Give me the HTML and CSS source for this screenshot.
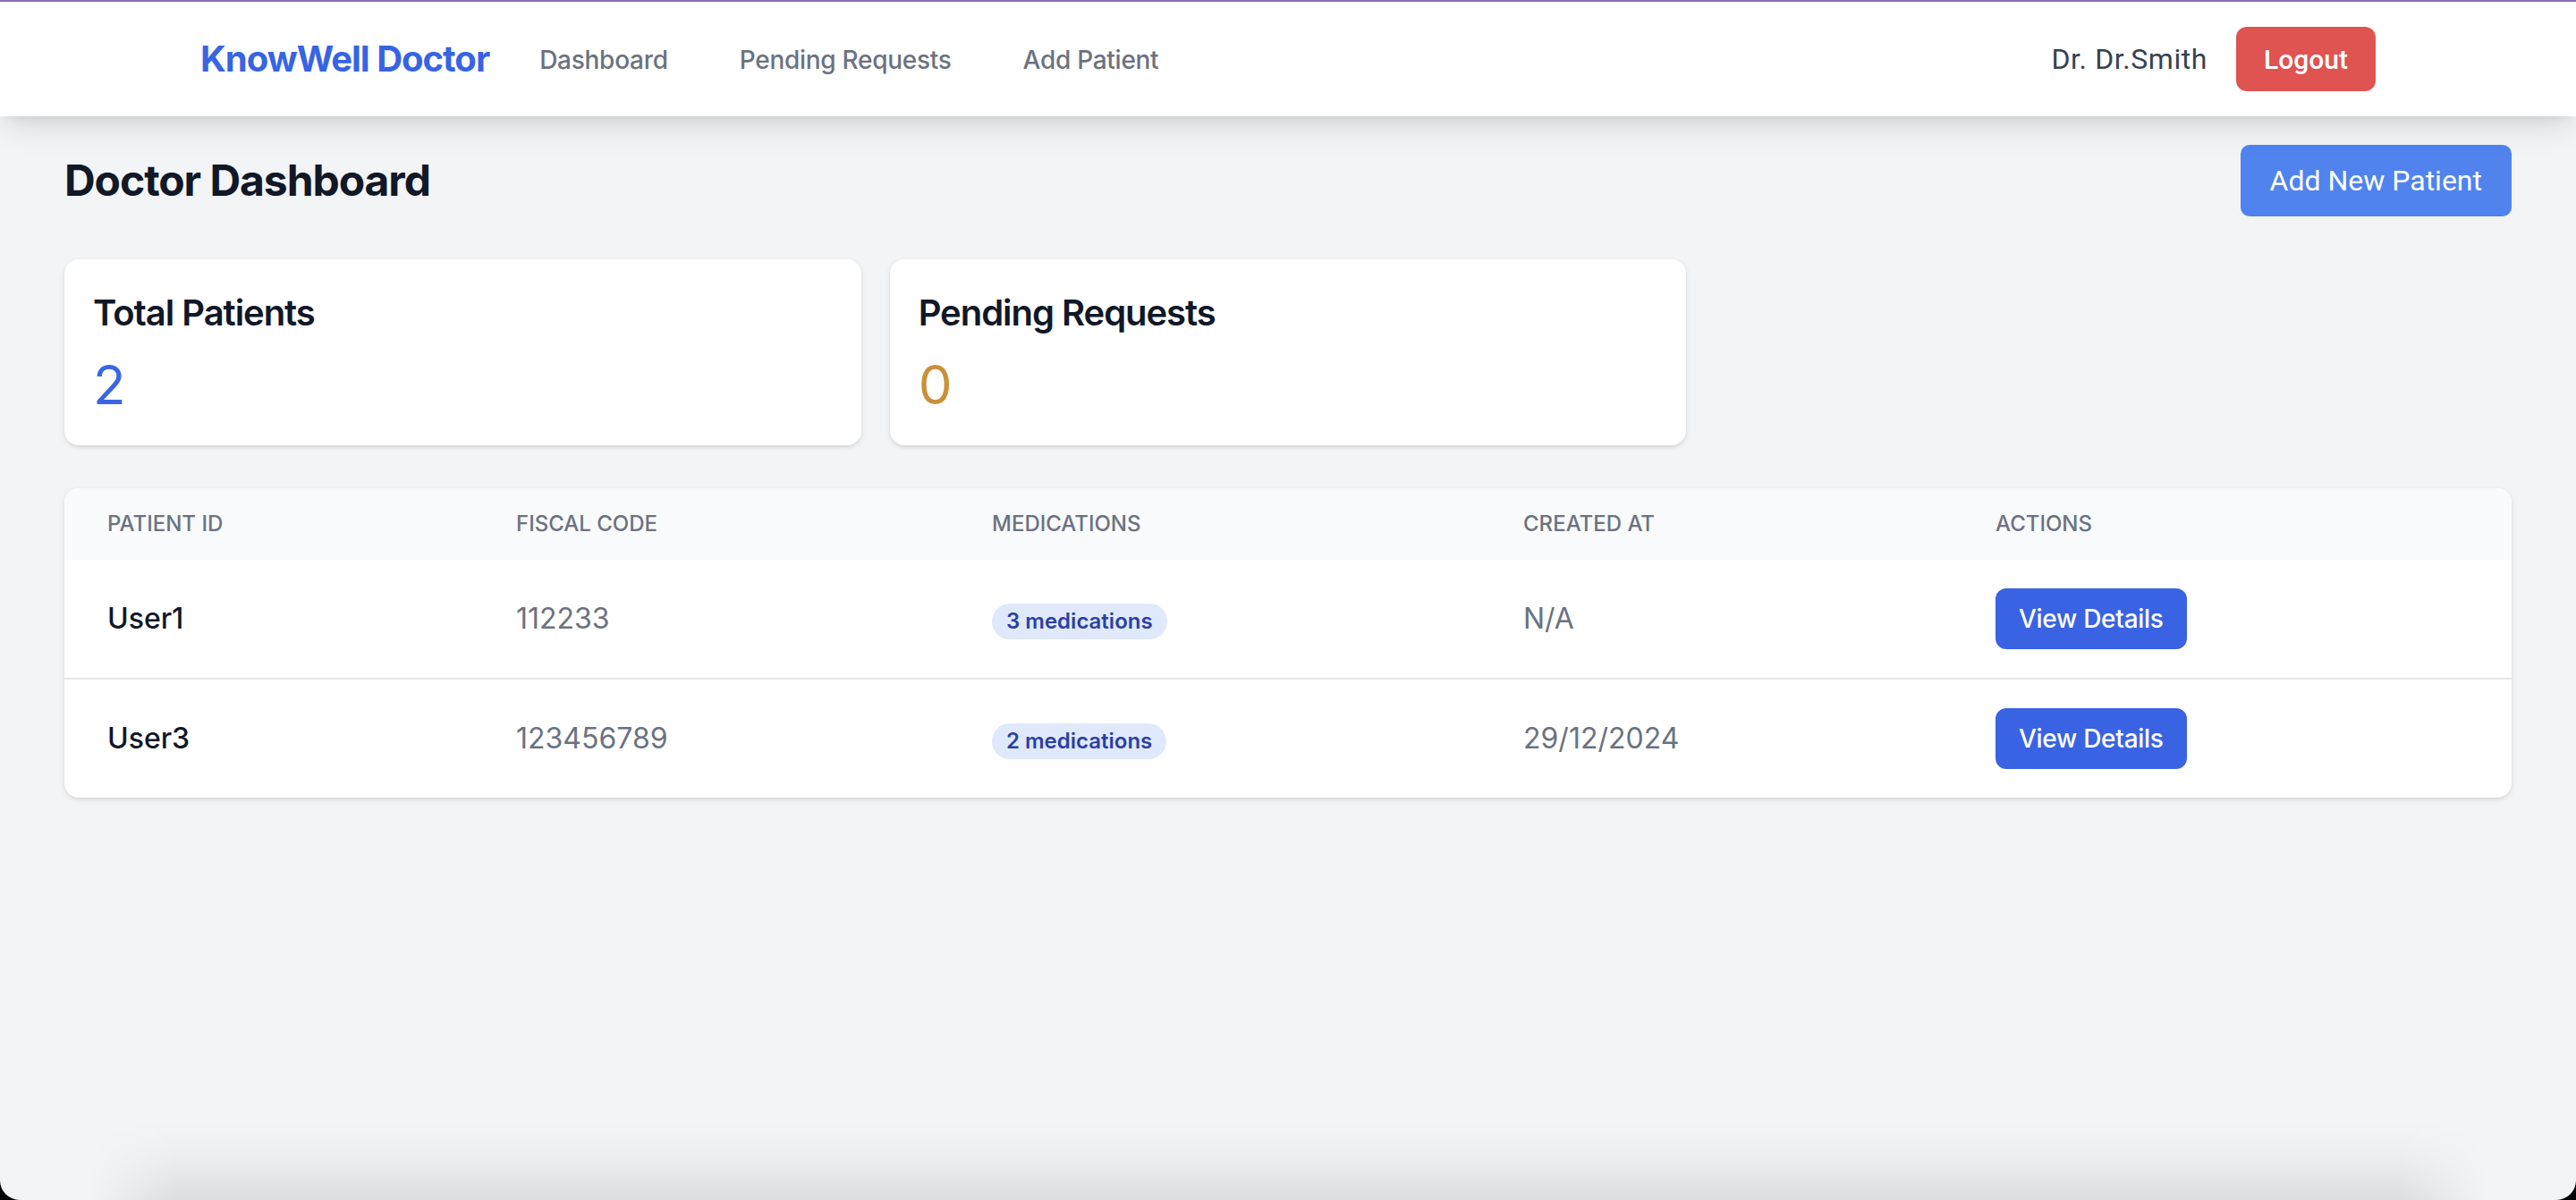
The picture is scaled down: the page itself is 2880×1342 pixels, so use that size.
FILE: index.html
```html
<!DOCTYPE html>
<html lang="en">
<head>
<meta charset="utf-8">
<title>KnowWell Doctor</title>
<link rel="stylesheet" href="styles.css">
</head>
<body>
<div class="window">
  <nav class="navbar">
    <div class="nav-inner">
      <div class="nav-left">
        <a class="brand" href="#">KnowWell Doctor</a>
        <div class="nav-links">
          <a class="nav-link" href="#">Dashboard</a>
          <a class="nav-link" href="#">Pending Requests</a>
          <a class="nav-link" href="#">Add Patient</a>
        </div>
      </div>
      <div class="nav-right">
        <span class="user-name">Dr. Dr.Smith</span>
        <button class="btn-logout">Logout</button>
      </div>
    </div>
  </nav>

  <main class="main">
    <div class="page-header">
      <h1 class="page-title">Doctor Dashboard</h1>
      <button class="btn-primary">Add New Patient</button>
    </div>

    <div class="stats">
      <div class="stat-card">
        <h3 class="stat-title">Total Patients</h3>
        <p class="stat-value stat-blue">2</p>
      </div>
      <div class="stat-card">
        <h3 class="stat-title">Pending Requests</h3>
        <p class="stat-value stat-yellow">0</p>
      </div>
    </div>

    <div class="table-card">
      <table class="patients">
        <colgroup>
          <col class="col-id">
          <col class="col-fiscal">
          <col class="col-meds">
          <col class="col-created">
          <col class="col-actions">
        </colgroup>
        <thead>
          <tr>
            <th>Patient ID</th>
            <th>Fiscal Code</th>
            <th>Medications</th>
            <th>Created At</th>
            <th>Actions</th>
          </tr>
        </thead>
        <tbody>
          <tr>
            <td class="cell-id">User1</td>
            <td class="cell-muted">112233</td>
            <td><span class="badge">3 medications</span></td>
            <td class="cell-muted">N/A</td>
            <td class="cell-actions"><button class="btn-view">View Details</button></td>
          </tr>
          <tr>
            <td class="cell-id">User3</td>
            <td class="cell-muted">123456789</td>
            <td><span class="badge">2 medications</span></td>
            <td class="cell-muted">29/12/2024</td>
            <td class="cell-actions"><button class="btn-view">View Details</button></td>
          </tr>
        </tbody>
      </table>
    </div>
  </main>

  <div class="fold-shade"></div>
</div>
</body>
</html>
```

FILE: styles.css
```css
* {
  box-sizing: border-box;
  margin: 0;
  padding: 0;
}

html {
  background: #000;
}

body {
  margin: 0;
  font-family: Inter, "Noto Sans", sans-serif;
  font-variant-numeric: proportional-nums;
  color: #111827;
}

.window {
  position: relative;
  height: 1342px;
  background: #f3f4f6;
  border-radius: 0 0 22px 22px;
  overflow: hidden;
}

/* ---------- Navbar ---------- */
.navbar {
  position: relative;
  z-index: 2;
  background: #fff;
  border-top: 2px solid #8a6db1;
  box-shadow: 0 20px 30px -6px rgba(0, 0, 0, 0.1), 0 8px 12px -8px rgba(0, 0, 0, 0.1);
}

.nav-inner {
  max-width: 2560px;
  margin: 0 auto;
  padding: 0 64px;
  height: 128px;
  display: flex;
  align-items: center;
  justify-content: space-between;
}

.nav-left {
  display: flex;
  align-items: center;
}

.brand {
  font-size: 40px;
  line-height: 56px;
  font-weight: 700;
  letter-spacing: -0.025em;
  color: #3764e3;
  text-decoration: none;
  margin-right: 32px;
}

.nav-links {
  display: flex;
  gap: 32px;
}

.nav-link {
  padding: 17px 24px 15px;
  font-size: 28px;
  line-height: 40px;
  font-weight: 500;
  letter-spacing: -0.01em;
  color: #6b7280;
  text-decoration: none;
}

.nav-right {
  display: flex;
  align-items: center;
  gap: 32px;
}

.user-name {
  font-family: Roboto, "Noto Sans", sans-serif;
  font-size: 32px;
  line-height: 48px;
  letter-spacing: 0.018em;
  color: #374151;
}

.btn-logout {
  font-family: Roboto, "Noto Sans", sans-serif;
  font-size: 30px;
  font-weight: 500;
  color: #fff;
  background: #df5350;
  border: 0;
  border-radius: 12px;
  height: 72px;
  padding: 0 31px;
}

/* ---------- Main ---------- */
.main {
  padding: 32px 72px;
}

.page-header {
  display: flex;
  align-items: center;
  justify-content: space-between;
  margin-bottom: 48px;
}

.page-title {
  font-size: 48px;
  line-height: 64px;
  font-weight: 700;
  letter-spacing: -0.022em;
  color: #111827;
}

.btn-primary {
  font-family: Roboto, "Noto Sans", sans-serif;
  font-size: 32px;
  line-height: 48px;
  font-weight: 400;
  color: #fff;
  background: #5083ee;
  border: 0;
  border-radius: 10px;
  height: 80px;
  padding: 0 33px;
}

/* ---------- Stats ---------- */
.stats {
  display: grid;
  grid-template-columns: repeat(3, 1fr);
  gap: 32px;
  margin-bottom: 48px;
}

.stat-card {
  background: #fff;
  border-radius: 16px;
  padding: 32px;
  box-shadow: 0 2px 6px rgba(0, 0, 0, 0.1), 0 2px 4px -2px rgba(0, 0, 0, 0.1);
}

.stat-title {
  font-size: 40px;
  line-height: 56px;
  font-weight: 600;
  letter-spacing: -0.026em;
  color: #111827;
}

.stat-value {
  margin-top: 16px;
  font-size: 60px;
  line-height: 72px;
  font-weight: 400;
}

.stat-blue {
  color: #3a66e4;
}

.stat-yellow {
  color: #c9913a;
}

/* ---------- Table ---------- */
.table-card {
  background: #fff;
  border-radius: 16px;
  overflow: hidden;
  box-shadow: 0 2px 6px rgba(0, 0, 0, 0.1), 0 2px 4px -2px rgba(0, 0, 0, 0.1);
}

.patients {
  width: 100%;
  border-collapse: collapse;
  table-layout: fixed;
}

.col-id { width: 457px; }
.col-fiscal { width: 532px; }
.col-meds { width: 594px; }
.col-created { width: 528px; }
.col-actions { width: auto; }

.patients th {
  background: #f9fafb;
  padding: 24px 48px;
  text-align: left;
  font-size: 24px;
  line-height: 32px;
  font-weight: 500;
  color: #6b7280;
  text-transform: uppercase;
  letter-spacing: 0;
}

.patients td {
  padding: 32px 48px;
  font-size: 32px;
  line-height: 48px;
  vertical-align: middle;
  white-space: nowrap;
}

.patients tbody tr + tr td {
  border-top: 2px solid #e5e7eb;
}

.cell-id {
  font-weight: 500;
  color: #111827;
}

.cell-muted {
  color: #6b7280;
}

.badge {
  display: inline-flex;
  padding: 0 16px;
  font-size: 24px;
  line-height: 40px;
  font-weight: 600;
  color: #2b3fa3;
  background: #dfe9fb;
  border-radius: 9999px;
}

.patients td.cell-actions {
  line-height: 0;
}

.btn-view {
  display: block;
  width: fit-content;
  font-family: Inter, "Noto Sans", sans-serif;
  font-size: 28px;
  line-height: 40px;
  font-weight: 500;
  letter-spacing: -0.01em;
  color: #fff;
  background: #3a63e3;
  border: 0;
  border-radius: 12px;
  padding: 14px 26px;
}

/* ---------- Bottom fold shadow ---------- */
.fold-shade {
  position: absolute;
  left: 100px;
  right: 100px;
  bottom: 0;
  height: 88px;
  pointer-events: none;
  background: linear-gradient(to bottom,
    rgba(0, 0, 0, 0) 0%,
    rgba(0, 0, 0, 0.012) 25%,
    rgba(0, 0, 0, 0.033) 50%,
    rgba(0, 0, 0, 0.06) 75%,
    rgba(0, 0, 0, 0.095) 100%);
  -webkit-mask-image: linear-gradient(to right, transparent 0, #000 100px, #000 calc(100% - 100px), transparent 100%);
  mask-image: linear-gradient(to right, transparent 0, #000 100px, #000 calc(100% - 100px), transparent 100%);
}
```
